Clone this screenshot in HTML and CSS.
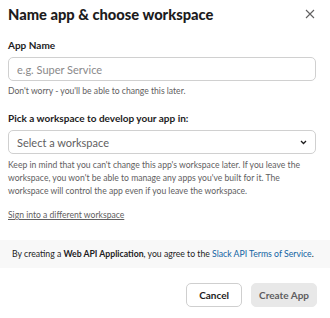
FILE: index.html
```html
<!DOCTYPE html>
<html lang="en">

<head>
    <meta charset="utf-8">
    <meta name="viewport" content="width=device-width, initial-scale=1.0">
    <title>Name app &amp; choose workspace</title>
    <link rel="stylesheet" href="styles.css">
</head>

<body>
    <div class="modal">
        <header class="modal_head">
            <h1>Name app &amp; choose workspace</h1>
            <button class="luk" aria-label="Close">
                <svg width="10" height="10" viewBox="0 0 10 10">
                    <path d="M1 1 L9 9 M9 1 L1 9" stroke="#616061" stroke-width="1.1" fill="none" />
                </svg>
            </button>
        </header>

        <section class="modal_body">
            <label class="field_label" for="app_name">App Name</label>
            <input class="field" id="app_name" type="text" placeholder="e.g. Super Service">
            <p class="hint">Don't worry - you'll be able to change this later.</p>

            <label class="field_label second" for="workspace">Pick a workspace to develop your app in:</label>
            <div class="select" id="workspace">
                <span>Select a workspace</span>
                <svg width="7" height="5" viewBox="0 0 7 5">
                    <path d="M1 1 L3.5 3.5 L6 1" stroke="#1d1c1d" stroke-width="1.3" fill="none" />
                </svg>
            </div>
            <p class="hint long">Keep in mind that you can't change this app's workspace later. If you leave the workspace, you won't be able to manage any apps you've built for it. The workspace will control the app even if you leave the workspace.</p>

            <a class="sign_in" href="#">Sign into a different workspace</a>
        </section>

        <p class="terms">By creating a <b>Web API Application</b>, you agree to the <a href="#">Slack API Terms of Service</a>.</p>

        <footer class="modal_foot">
            <button class="btn">Cancel</button>
            <button class="btn create" disabled>Create App</button>
        </footer>
    </div>
</body>

</html>
```

FILE: styles.css
```css
* {
    box-sizing: border-box;
}

body {
    margin: 0;
    background: #fff;
    font-family: Lato, "Liberation Sans", sans-serif;
    color: #1d1c1d;
}

.modal {
    width: 330px;
    height: 318px;
}

.modal_head {
    display: flex;
    justify-content: space-between;
    align-items: center;
    padding: 2px 15px 0 8px;
    height: 26px;
}

h1 {
    margin: 0;
    font-size: 14.7px;
    font-weight: 900;
}

.luk {
    border: 0;
    background: none;
    padding: 0;
    display: flex;
}

.modal_body {
    padding: 12px 14px 0 8px;
    display: flex;
    flex-direction: column;
}

.field_label {
    font-size: 10px;
    font-weight: 700;
    line-height: 14px;
    margin-bottom: 5px;
}

.field_label.second {
    margin-top: 13px;
    margin-bottom: 5px;
}

.field,
.select {
    height: 24px;
    border: 1px solid #d0d0d0;
    border-radius: 5px;
    font-family: inherit;
    font-size: 11px;
    padding: 0 8px;
    color: #1d1c1d;
}

.field::placeholder {
    color: #8a898a;
}

.select {
    display: flex;
    justify-content: space-between;
    align-items: center;
    color: #616061;
}

.hint {
    margin: 4px 0 0;
    font-size: 8.6px;
    line-height: 13px;
    color: #616061;
}

.hint.long {
    margin-top: 5px;
}

.sign_in {
    margin-top: 11px;
    font-size: 8.6px;
    line-height: 13px;
    color: #616061;
    align-self: flex-start;
}

.terms {
    margin: 18px 0 0;
    background: #f8f8f8;
    height: 28px;
    line-height: 28px;
    padding: 0 12px;
    font-size: 8.7px;
    color: #1d1c1d;
}

.terms a {
    color: #1264a3;
    text-decoration: none;
}

.modal_foot {
    display: flex;
    justify-content: flex-end;
    gap: 9px;
    padding: 15px 13px 0 0;
}

.btn {
    height: 24px;
    padding: 0 12px;
    font-family: inherit;
    font-size: 10px;
    font-weight: 700;
    border-radius: 5px;
    border: 1px solid #cfcfcf;
    background: #fff;
    color: #1d1c1d;
}

.create {
    border-color: #e8e8e8;
    background: #e8e8e8;
    color: #5e5d60;
    padding: 0 7px;
}
```
